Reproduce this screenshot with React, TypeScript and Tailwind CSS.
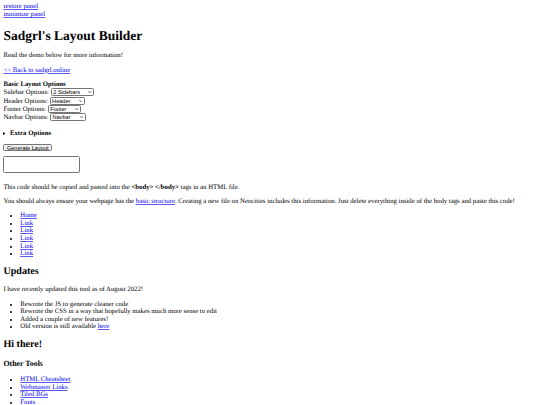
import { ReactNode } from 'react';

// page is a 1280px-wide default-styled document shown at 540px (k = 0.421875)
const linkClass = 'text-[#0000ee] underline decoration-[#5a5af0]';
const controlFont = "font-['Liberation_Sans',Arial,sans-serif] text-[5.6px] text-black";

const Bullets = ({ children }: { children: ReactNode }) => (
  <ul className="my-[6.75px] list-disc pl-[16.9px]">{children}</ul>
);

const Chevron = () => (
  <svg viewBox="0 0 10 6" className="pointer-events-none absolute right-[2.2px] top-1/2 h-[2.2px] w-[3.6px] -translate-y-1/2">
    <path d="M1 1l4 4 4-4" fill="none" stroke="#222" strokeWidth="2" />
  </svg>
);

const NavSelect = ({ value, width }: { value: string; width: string }) => (
  <span className="relative inline-block align-middle">
    <select
      defaultValue={value}
      className={`${width} ${controlFont} block h-[8px] appearance-none rounded-[1.4px] border-[0.5px] border-[#767676] bg-white pl-[1.6px] leading-[7px]`}
    >
      <option>{value}</option>
    </select>
    <Chevron />
  </span>
);

const App = () => {
  return (
    <div className="min-h-[405px] bg-white p-[3.375px] font-['Liberation_Serif','Times_New_Roman',serif] text-[6.75px] leading-[7.6px] text-black [text-rendering:geometricPrecision]">
      <a className={linkClass}>restore panel</a>
      <br />
      <a className={linkClass}>minimize panel</a>

      <h1 className="my-[9px] text-[13.5px] font-bold leading-[15.6px]">Sadgrl's Layout Builder</h1>
      <p className="my-[6.75px]">Read the demo below for more information!</p>
      <p className="my-[6.75px]">
        <a className={linkClass}>&lt;&lt; Back to sadgrl.online</a>
      </p>

      <form>
        <b>Basic Layout Options</b>
        <br />
        Sidebar Options: <NavSelect value="2 Sidebars" width="w-[43.5px]" />
        <br />
        Header Options: <NavSelect value="Header" width="w-[35px]" />
        <br />
        Footer Options: <NavSelect value="Footer" width="w-[33.5px]" />
        <br />
        Navbar Options: <NavSelect value="Navbar" width="w-[35.7px]" />

        <details className="mt-[9.3px] mb-[6px]">
          <summary className="flex items-center gap-[4px] font-bold">
            <svg viewBox="0 0 6 7" className="-mt-[0.5px] h-[3px] w-[2.6px]">
              <path d="M0 0L6 3.5 0 7z" fill="#111" />
            </svg>
            Extra Options
          </summary>
        </details>

        <button
          type="button"
          className={`${controlFont} block h-[7.6px] rounded-[1.4px] border-[0.5px] border-[#767676] bg-[#efefef] px-[2.5px] leading-[6px]`}
        >
          Generate Layout
        </button>

        <div className="relative mt-[5px] w-[77px]">
          <textarea className="block h-[16.5px] w-[77px] resize-none rounded-[1.6px] border-[0.5px] border-[#767676] bg-white" />
          <svg viewBox="0 0 6 6" className="pointer-events-none absolute bottom-[1px] right-[1px] h-[2.4px] w-[2.4px]">
            <path d="M6 1L1 6M6 4L4 6" stroke="#888" strokeWidth="1" />
          </svg>
        </div>
      </form>

      <p className="mt-[10.6px] mb-[6.75px]">
        This code should be copied and pasted into the <b>&lt;body&gt; &lt;/body&gt;</b> tags in an HTML file.
      </p>
      <p className="my-[6.75px]">
        You should always ensure your webpage has the <a className={linkClass}>basic structure</a>. Creating a new
        file on Neocities includes this information. Just delete everything inside of the body tags and paste this
        code!
      </p>

      <Bullets>
        <li><a className={linkClass}>Home</a></li>
        <li><a className={linkClass}>Link</a></li>
        <li><a className={linkClass}>Link</a></li>
        <li><a className={linkClass}>Link</a></li>
        <li><a className={linkClass}>Link</a></li>
        <li><a className={linkClass}>Link</a></li>
      </Bullets>

      <h2 className="my-[8.4px] text-[10.125px] font-bold leading-[11.6px]">Updates</h2>
      <p className="my-[6.75px]">I have recently updated this tool as of August 2022!</p>
      <Bullets>
        <li>Rewrote the JS to generate cleaner code</li>
        <li>Rewrote the CSS in a way that hopefully makes much more sense to edit</li>
        <li>Added a couple of new features!</li>
        <li>
          Old version is still available <a className={linkClass}>here</a>
        </li>
      </Bullets>

      <h2 className="my-[8.4px] text-[10.125px] font-bold leading-[11.6px]">Hi there!</h2>
      <h3 className="my-[7.9px] text-[7.9px] font-bold leading-[9.1px]">Other Tools</h3>
      <Bullets>
        <li><a className={linkClass}>HTML Cheatsheet</a></li>
        <li><a className={linkClass}>Webmaster Links</a></li>
        <li><a className={linkClass}>Tiled BGs</a></li>
        <li><a className={linkClass}>Fonts</a></li>
      </Bullets>
    </div>
  );
};

export default App;
